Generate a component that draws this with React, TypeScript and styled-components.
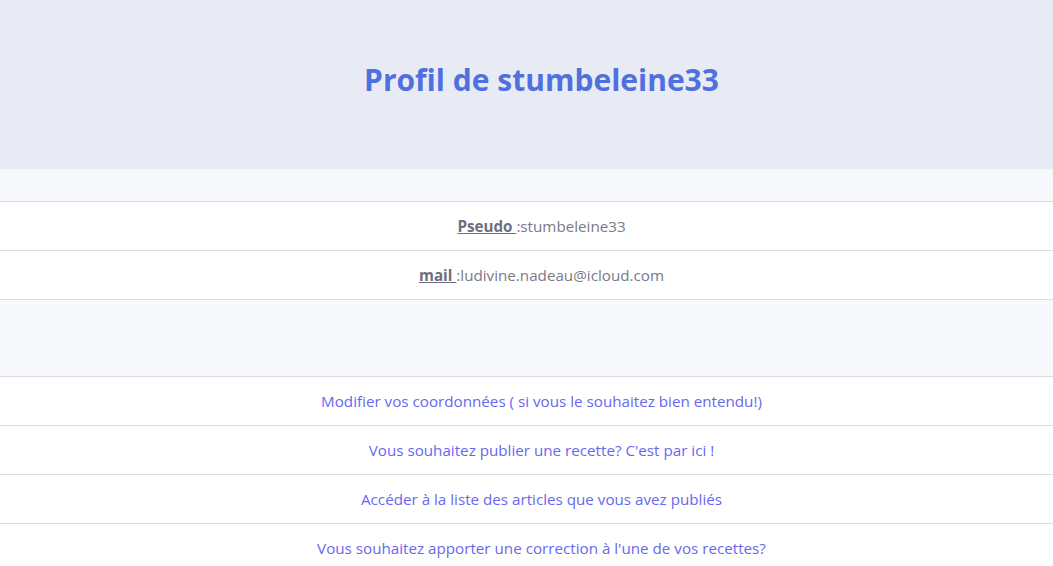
import React from "react";
import styled, { createGlobalStyle } from "styled-components";

const Global = createGlobalStyle`
  html, body { margin: 0; padding: 0; background: #f7f8fc; }
  body { font-family: "Open Sans", "Noto Sans", sans-serif; }
`;

const Header = styled.header`
  height: 169px;
  padding-left: 30px;
  background: #e8ebf4;
  display: flex;
  align-items: center;
  justify-content: center;
`;

const Title = styled.h1`
  margin: 0 0 10px;
  font-size: 30px;
  line-height: 40px;
  font-weight: 700;
  color: #5070e0;
`;

const Spacer = styled.div<{ $h: number }>`
  height: ${(p) => p.$h}px;
`;

const List = styled.ul`
  list-style: none;
  margin: 0;
  padding: 0;
  border-top: 1px solid #dcdcdc;
  background: #fff;
`;

const Row = styled.li`
  height: 48px;
  padding-left: 30px;
  border-bottom: 1px solid #dcdcdc;
  display: flex;
  align-items: center;
  justify-content: center;
  font-size: 15.2px;
`;

const Text = styled.span`
  white-space: pre;
`;

const Label = styled.span`
  color: #6e6e80;
  font-weight: 700;
  text-decoration: underline;
`;

const Value = styled.span`
  color: #7a7a88;
`;

const Link = styled.a`
  color: #6868ee;
  text-decoration: none;
`;

export default function App() {
  return (
    <>
      <Global />
      <Header>
        <Title>Profil de stumbeleine33</Title>
      </Header>
      <Spacer $h={32} />
      <List>
        <Row>
          <Text>
            <Label>Pseudo </Label>
            <Value>:stumbeleine33</Value>
          </Text>
        </Row>
        <Row>
          <Text>
            <Label>mail </Label>
            <Value>:ludivine.nadeau@icloud.com</Value>
          </Text>
        </Row>
      </List>
      <Spacer $h={76} />
      <List>
        <Row>
          <Link href="#">Modifier vos coordonnées ( si vous le souhaitez bien entendu!)</Link>
        </Row>
        <Row>
          <Link href="#">Vous souhaitez publier une recette? C'est par ici !</Link>
        </Row>
        <Row>
          <Link href="#">Accéder à la liste des articles que vous avez publiés</Link>
        </Row>
        <Row>
          <Link href="#">Vous souhaitez apporter une correction à l'une de vos recettes?</Link>
        </Row>
      </List>
    </>
  );
}
